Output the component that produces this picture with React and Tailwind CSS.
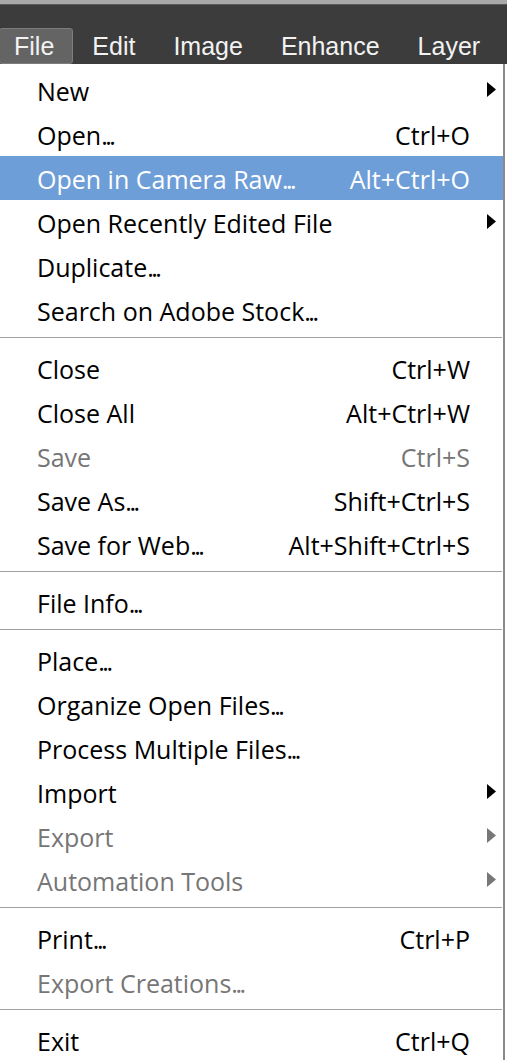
import React from "react";

const menuBar = ["File", "Edit", "Image", "Enhance", "Layer"];

const items = [
  { label: "New", sub: true },
  { label: "Open...", shortcut: "Ctrl+O" },
  { label: "Open in Camera Raw...", shortcut: "Alt+Ctrl+O", active: true },
  { label: "Open Recently Edited File", sub: true },
  { label: "Duplicate..." },
  { label: "Search on Adobe Stock..." },
  { sep: true },
  { label: "Close", shortcut: "Ctrl+W" },
  { label: "Close All", shortcut: "Alt+Ctrl+W" },
  { label: "Save", shortcut: "Ctrl+S", disabled: true },
  { label: "Save As...", shortcut: "Shift+Ctrl+S" },
  { label: "Save for Web...", shortcut: "Alt+Shift+Ctrl+S" },
  { sep: true },
  { label: "File Info..." },
  { sep: true },
  { label: "Place..." },
  { label: "Organize Open Files..." },
  { label: "Process Multiple Files..." },
  { label: "Import", sub: true },
  { label: "Export", sub: true, disabled: true },
  { label: "Automation Tools", sub: true, disabled: true },
  { sep: true },
  { label: "Print...", shortcut: "Ctrl+P" },
  { label: "Export Creations...", disabled: true },
  { sep: true },
  { label: "Exit", shortcut: "Ctrl+Q" },
];

const Arrow = ({ color }) => (
  <svg width="10" height="16" viewBox="0 0 10 16" className="absolute left-[487px] top-[14px]">
    <path d="M0 0 L9 7.5 L0 15 Z" fill={color} />
  </svg>
);

// the app draws its ellipsis tighter than three plain dots
const Label = ({ text }) => {
  if (!text.endsWith("...")) return text;
  return (
    <>
      {text.slice(0, -3)}
      <span className="tracking-[-2.5px]">...</span>
    </>
  );
};

const MenuItem = ({ item }) => {
  if (item.sep) {
    return (
      <div className="h-[14px] pt-[5px]">
        <div className="h-px bg-[#a0a0a0] mr-[1px]" />
      </div>
    );
  }
  const text = item.active
    ? "text-white"
    : item.disabled
    ? "text-[#767676]"
    : "text-black";
  return (
    <div
      className={`relative h-[44px] flex items-center pl-[37px] pr-[33px] pt-[3px] ${
        item.active ? "bg-[#6e9ed8]" : ""
      } ${text}`}
    >
      <span className="flex-1">
        <Label text={item.label} />
      </span>
      {item.shortcut && <span>{item.shortcut}</span>}
      {item.sub && <Arrow color={item.disabled ? "#777777" : "#000000"} />}
    </div>
  );
};

export default function App() {
  return (
    <div className="w-[507px] h-[1060px] overflow-hidden bg-white">
      <div className="h-[5px] bg-[#a9a9a9] border-b border-[#5a5a5a]" />
      <div
        className="h-[59px] bg-[#3c3c3c] flex items-end text-[25px] text-[#f2f2f2]"
        style={{ fontFamily: '"Liberation Sans", Arial, sans-serif' }}
      >
        {menuBar.map((m, i) => (
          <div
            key={m}
            className={
              i === 0
                ? "h-[36px] pl-[14px] pr-[18px] flex items-center bg-[#646464] border border-[#7d7d7d] rounded-[3px] -ml-px pt-[1px]"
                : "h-[36px] px-[19px] flex items-center pt-[1px]"
            }
          >
            {m}
          </div>
        ))}
      </div>
      <div
        className="w-[505px] h-[996px] pt-[4px] border-r-2 border-[#8a8a8a] text-[25px]"
        style={{ fontFamily: '"Open Sans", "Noto Sans", sans-serif' }}
      >
        {items.map((item, i) => (
          <MenuItem key={i} item={item} />
        ))}
      </div>
    </div>
  );
}
